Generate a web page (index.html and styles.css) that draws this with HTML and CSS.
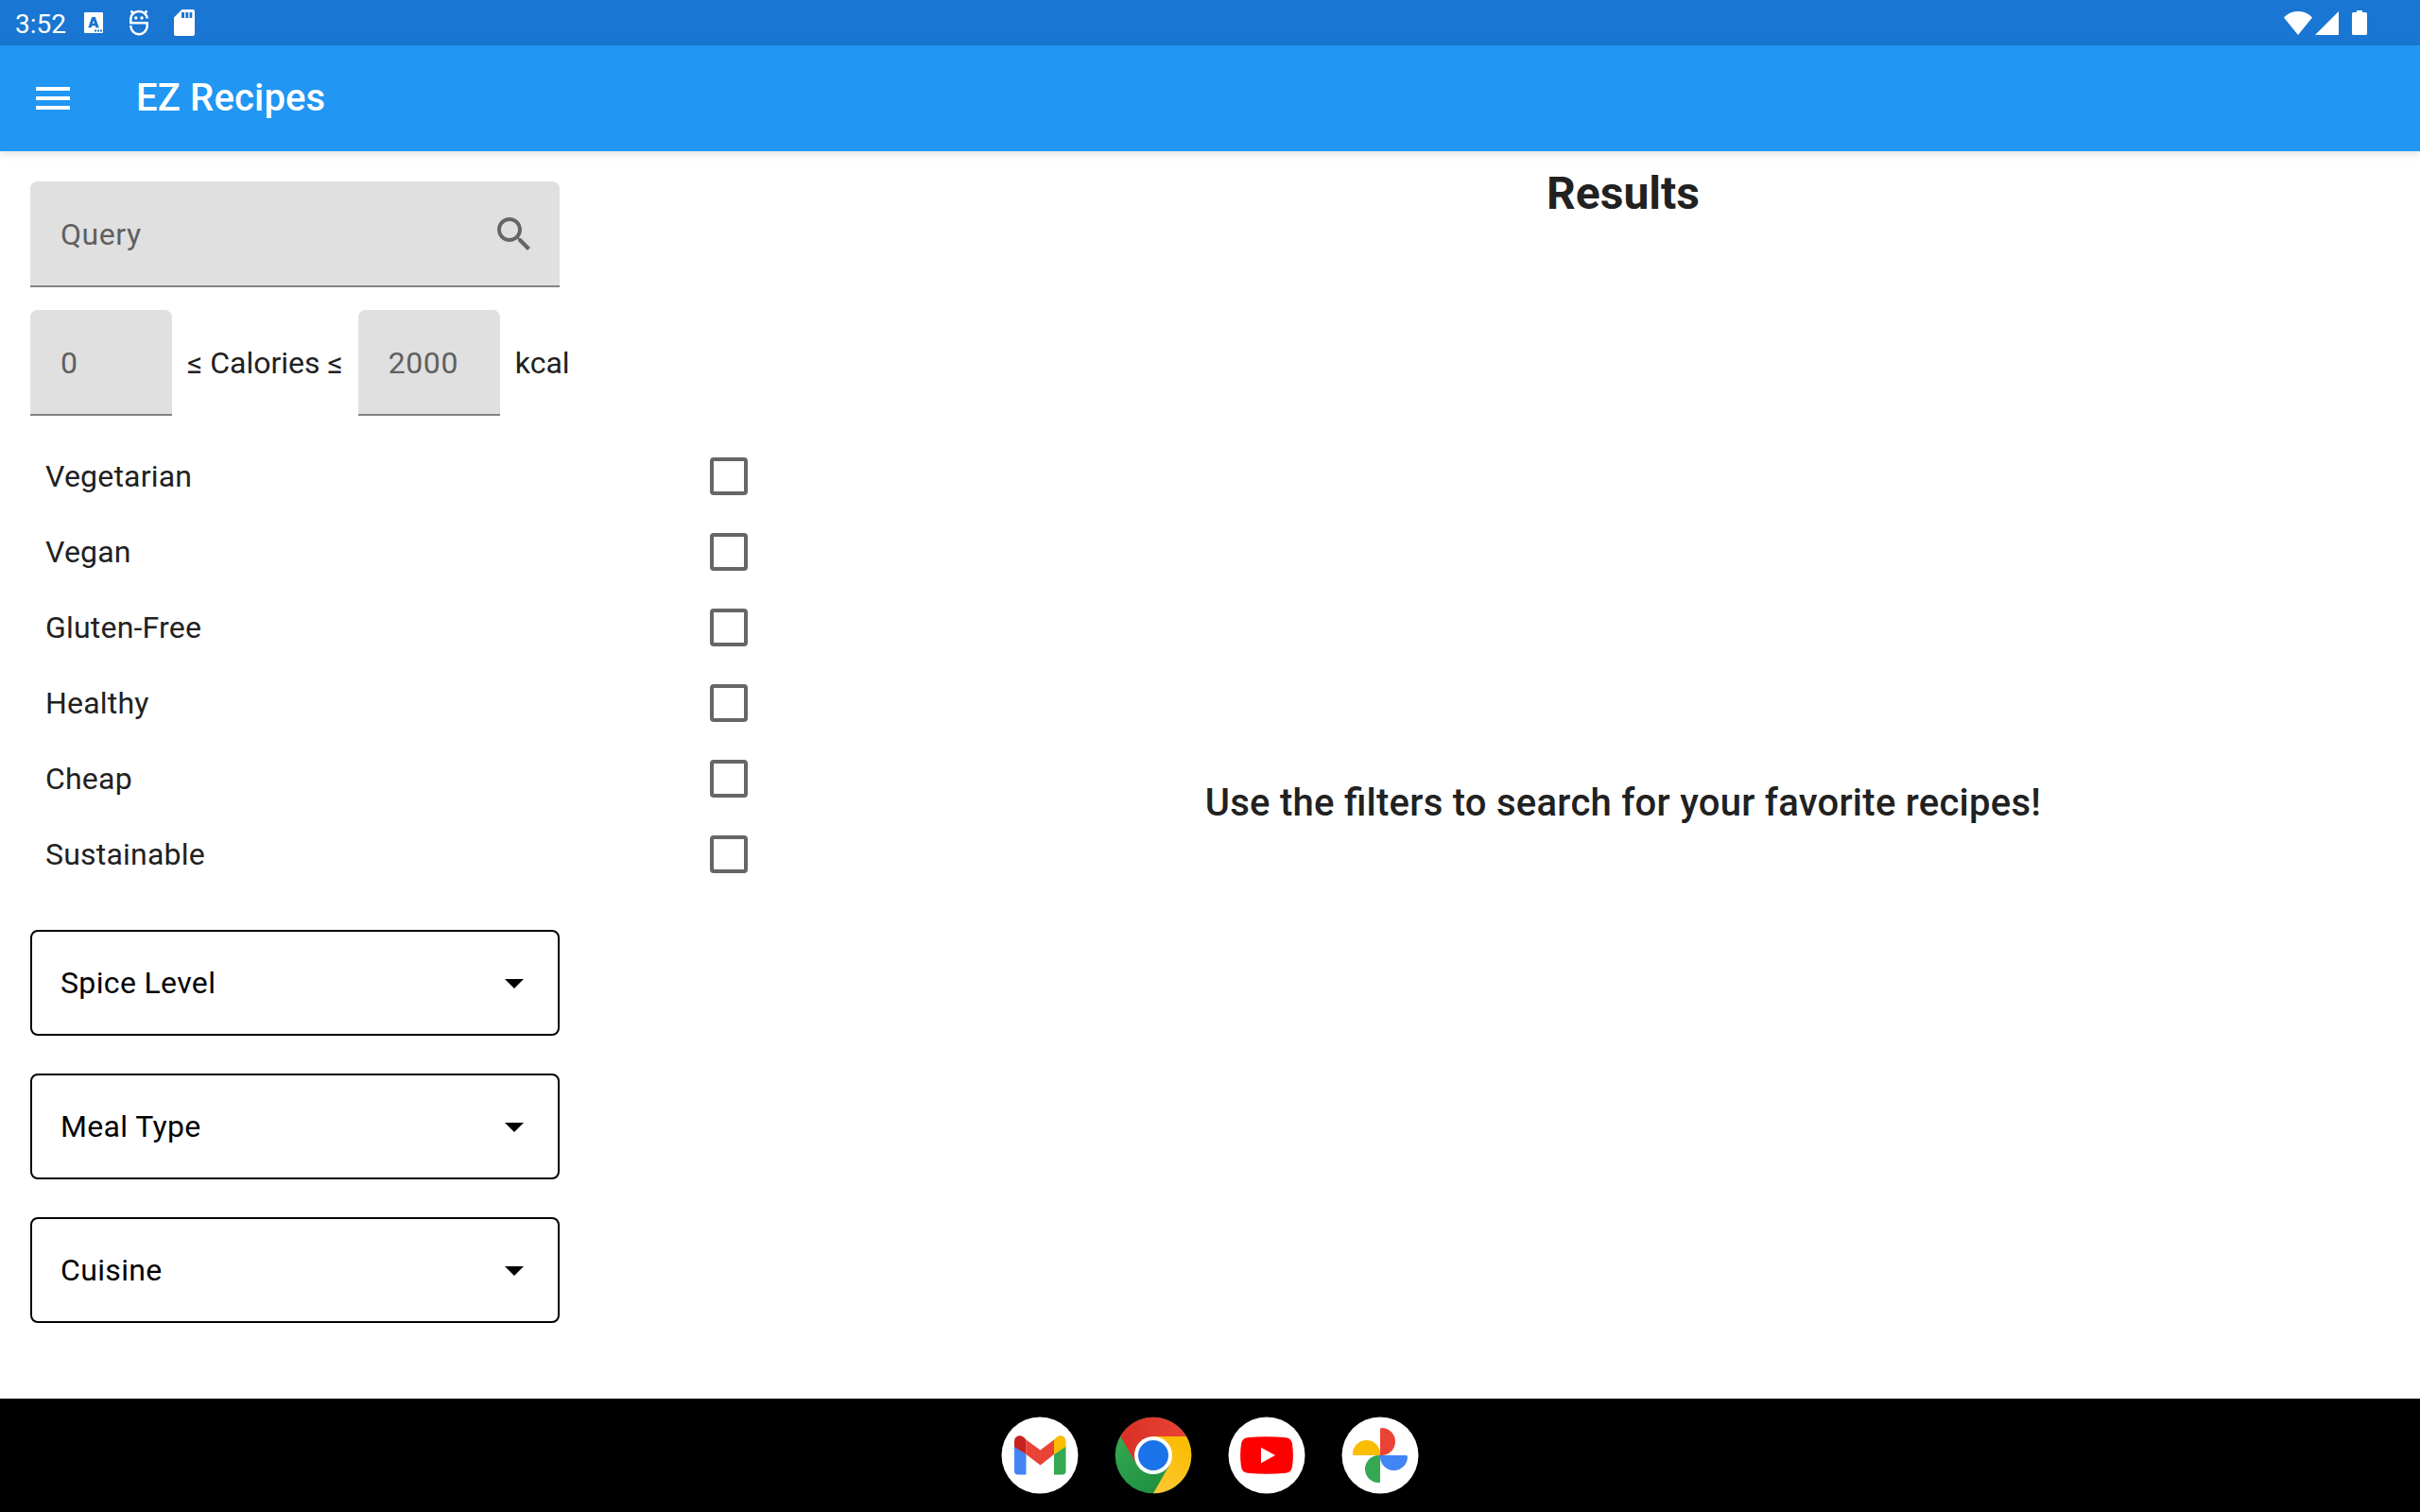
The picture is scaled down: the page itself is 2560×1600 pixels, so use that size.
FILE: index.html
```html
<!DOCTYPE html>
<html lang="en">
<head>
<meta charset="utf-8">
<title>EZ Recipes</title>
<link rel="stylesheet" href="styles.css">
</head>
<body>
<div class="status-bar">
  <div class="status-left">
    <span class="clock">3:52</span>
    <svg class="ic-a" width="20" height="22" viewBox="0 0 20 22"><path fill="#fff" d="M1 0h18a1 1 0 0 1 1 1v20a1 1 0 0 1-1 1H1a1 1 0 0 1-1-1V1a1 1 0 0 1 1-1z"/><path fill="#1976d2" fill-rule="evenodd" d="M8.200 5h3.600l3.900 11.300h-3.300l-.7-2H8.300l-.7 2H4.300zM10 8.700l-1 3.100h2z"/><path fill="#1976d2" d="M11 18.500h2v2h-2zM14 18.500h2v2h-2zM17 18.500h2v2h-2z"/></svg>
    <svg class="ic-bot" width="20" height="28" viewBox="0 0 20 28" fill="none" stroke="#fff" stroke-width="2.500"><path d="M1.300 14.300V9.500a8.700 7.500 0 0 1 17.400 0"/><path d="M0 14.300h18.700v3.200a8.700 8.700 0 0 1-17.400 0V17"/><path d="M1.500 1.500l3 3M18.500 1.500l-3 3"/><circle cx="6.800" cy="9" r="1.700" fill="#fff" stroke="none"/><circle cx="13" cy="9" r="1.700" fill="#fff" stroke="none"/></svg>
    <svg class="ic-sd" width="22" height="28" viewBox="0 0 22 28"><path fill="#fff" fill-rule="evenodd" d="M8.500 0H20a2 2 0 0 1 2 2v24a2 2 0 0 1-2 2H2a2 2 0 0 1-2-2V8.500zM8 3v6h3V3zm4.300 0v6h3V3zm4.300 0v6h2.700V3z"/></svg>
  </div>
  <div class="status-right">
    <svg width="30" height="25" viewBox="0 0 30 25"><path fill="#fff" d="M0 6.500C8-2.200 22-2.200 30 6.500L15 25z"/></svg>
    <svg class="ic-signal" width="25" height="25" viewBox="0 0 25 25"><path fill="#fff" d="M25 0v25H0z"/></svg>
    <svg class="ic-battery" width="16" height="26" viewBox="0 0 16 26"><path fill="#fff" d="M5 0h6v2h3.500A1.500 1.500 0 0 1 16 3.500v21a1.500 1.500 0 0 1-1.500 1.500h-13A1.500 1.500 0 0 1 0 24.500v-21A1.500 1.500 0 0 1 1.500 2H5z"/></svg>
  </div>
</div>
<header class="app-bar">
  <svg width="48" height="48" viewBox="0 0 24 24"><path fill="#fff" d="M3 18h18v-2H3v2zm0-5h18v-2H3v2zm0-7v2h18V6H3z"/></svg>
  <h1 class="title">EZ Recipes</h1>
</header>
<main class="content">
  <section class="filters">
    <div class="field field-query"><span>Query</span>
      <svg width="48" height="48" viewBox="0 0 24 24"><path fill="#666" d="M15.500 14h-.79l-.28-.27C15.410 12.590 16 11.110 16 9.500 16 5.910 13.090 3 9.500 3S3 5.910 3 9.500 5.910 16 9.500 16c1.610 0 3.090-.59 4.230-1.570l.27.28v.79l5 4.990L20.490 19l-4.990-5zm-6 0C7.010 14 5 11.990 5 9.500S7.010 5 9.500 5 14 7.010 14 9.500 11.990 14 9.500 14z"/></svg>
    </div>
    <div class="calories">
      <div class="field field-number"><span>0</span></div>
      <span class="label">≤ Calories ≤</span>
      <div class="field field-number"><span>2000</span></div>
      <span class="label">kcal</span>
    </div>
    <ul class="checks">
      <li><span>Vegetarian</span><i class="box"></i></li>
      <li><span>Vegan</span><i class="box"></i></li>
      <li><span>Gluten-Free</span><i class="box"></i></li>
      <li><span>Healthy</span><i class="box"></i></li>
      <li><span>Cheap</span><i class="box"></i></li>
      <li><span>Sustainable</span><i class="box"></i></li>
    </ul>
    <div class="selects">
      <div class="select"><span>Spice Level</span><svg width="48" height="48" viewBox="0 0 24 24"><path d="M7 10l5 5 5-5z"/></svg></div>
      <div class="select"><span>Meal Type</span><svg width="48" height="48" viewBox="0 0 24 24"><path d="M7 10l5 5 5-5z"/></svg></div>
      <div class="select"><span>Cuisine</span><svg width="48" height="48" viewBox="0 0 24 24"><path d="M7 10l5 5 5-5z"/></svg></div>
    </div>
  </section>
  <section class="results">
    <h2 class="results-title">Results</h2>
    <p class="message">Use the filters to search for your favorite recipes!</p>
  </section>
</main>
<nav class="taskbar">
  <svg width="82" height="82" viewBox="-41 -41 82 82"><circle r="40.500" fill="#fff"/><path fill="#4285f4" d="M-27-10l12.500 9v21.500H-23a4 4 0 0 1-4-4z"/><path fill="#34a853" d="M27.500-10L15-1v21.500h8.500a4 4 0 0 0 4-4z"/><path fill="#ea4335" d="M-14.500-16.500L.5-5.500 15-16.500V-1L.5 10.500-14.500-1z"/><path fill="#c5221f" d="M-27-9v-5.500c0-6 6-8 10-4.500l2.500 2.500V-1z"/><path fill="#fbbc04" d="M27.500-9v-5.500c0-6-6-8-10-4.500L15-16.500V-1z"/></svg>
  <svg width="82" height="82" viewBox="-41 -41 82 82">
    <defs>
      <linearGradient id="r" x1="0" x2="1"><stop offset="0" stop-color="#d93025"/><stop offset="1" stop-color="#ea4335"/></linearGradient>
      <linearGradient id="y" x1="0" y1="1" x2=".4" y2="0"><stop offset="0" stop-color="#fcc934"/><stop offset="1" stop-color="#fbbc04"/></linearGradient>
      <linearGradient id="g" x1=".6" y1="1" x2="0" y2=".3"><stop offset="0" stop-color="#1e8e3e"/><stop offset="1" stop-color="#34a853"/></linearGradient>
    </defs>
    <circle r="40.300" fill="url(#g)"/>
    <path fill="url(#y)" d="M0-20H35A40.300 40.300 0 0 1 0 40.300L17.300 10z"/>
    <path fill="url(#r)" d="M-34.800-20.200A40.300 40.300 0 0 1 35-20H0L-17.300 10z"/>
    <circle r="20" fill="#fff"/><circle r="16" fill="#1a73e8"/>
  </svg>
  <svg width="82" height="82" viewBox="-41 -41 82 82"><circle r="40.500" fill="#fff"/><path fill="#f00" d="M-20.500-18.800Q0-20.600 20.500-18.800 26-18 27-12 28.800 0 27 12 26 18 20.500 18.800 0 20.600-20.500 18.800-26 18-27 12-28.800 0-27-12-26-18-20.500-18.800z"/><path fill="#fff" d="M-6-8.300L9 0-6 8.300z"/></svg>
  <svg width="82" height="82" viewBox="-41 -41 82 82"><circle r="40.500" fill="#fff"/><path fill="#ea4335" d="M0 0v-27.500q0-1.500 1.500-1.500a14.500 14.500 0 0 1 0 29z"/><path fill="#4285f4" d="M0 0h27.500q1.500 0 1.500 1.500a14.500 14.500 0 0 1-29 0z"/><path fill="#34a853" d="M0 0v27.500q0 1.500-1.500 1.500a14.500 14.500 0 0 1 0-29z"/><path fill="#fbbc04" d="M0 0h-27.500q-1.500 0-1.500-1.500a14.500 14.500 0 0 1 29 0z"/></svg>
</nav>
</body>
</html>
```
FILE: styles.css
```css
* { box-sizing: border-box; }
body {
  margin: 0;
  width: 2560px;
  height: 1600px;
  display: flex;
  flex-direction: column;
  overflow: hidden;
  background: #fff;
  color: #212121;
  font: 400 32px/48px Roboto, sans-serif;
}
svg { display: block; flex: none; }
h1, h2, p, ul { margin: 0; padding: 0; }

.status-bar {
  height: 48px;
  display: flex;
  justify-content: space-between;
  padding: 0 56px 0 16px;
  background: #1976d2;
  color: #fff;
}
.status-left, .status-right { display: flex; align-items: center; }
.clock { width: 73px; font-size: 28px; line-height: 32px; padding-top: 3px; }
.ic-bot { margin-left: 28px; }
.ic-sd { margin-left: 27px; }
.ic-signal { margin: 1px 14px 0 3px; }

.app-bar {
  height: 112px;
  display: flex;
  align-items: center;
  gap: 64px;
  padding: 0 32px;
  background: #2196f3;
  box-shadow: 0 2px 9px rgba(0, 0, 0, .15);
}
.title { color: #fff; font-size: 40px; font-weight: 500; letter-spacing: .15px; }

.content { flex: 1; display: flex; }
.filters { width: 874px; padding: 32px; }

.field {
  height: 112px;
  display: flex;
  align-items: center;
  justify-content: space-between;
  padding: 0 24px 0 32px;
  background: #e0e0e0;
  border-radius: 8px 8px 0 0;
  box-shadow: inset 0 -2px #838383;
  color: #5f5f5f;
  letter-spacing: .55px;
}
.field-query { width: 560px; }
.field-number { width: 150px; }
.calories { display: flex; align-items: center; gap: 16px; margin-top: 24px; }
.label { white-space: nowrap; }

.checks { list-style: none; margin-top: 24px; }
.checks li {
  width: 759px;
  height: 80px;
  display: flex;
  align-items: center;
  justify-content: space-between;
  padding-left: 16px;
  letter-spacing: .2px;
}
.box { width: 40px; height: 40px; border: 4px solid #666; border-radius: 4px; }

.selects { display: flex; flex-direction: column; gap: 40px; margin-top: 40px; }
.select {
  width: 560px;
  height: 112px;
  display: flex;
  align-items: center;
  justify-content: space-between;
  padding: 0 22px 0 30px;
  border: 2px solid #000;
  border-radius: 8px;
  color: #000;
  letter-spacing: .35px;
}

.results {
  flex: 1;
  display: flex;
  flex-direction: column;
  align-items: center;
  padding-top: 17px;
}
.results-title { font-size: 48px; font-weight: 700; line-height: 56px; }
.message {
  margin: auto 0;
  padding-bottom: 14px;
  font-size: 40px;
  font-weight: 500;
  letter-spacing: .26px;
  font-feature-settings: "liga" 1;
}

.taskbar {
  height: 120px;
  display: flex;
  align-items: center;
  justify-content: center;
  gap: 38px;
  background: #000;
}
```
